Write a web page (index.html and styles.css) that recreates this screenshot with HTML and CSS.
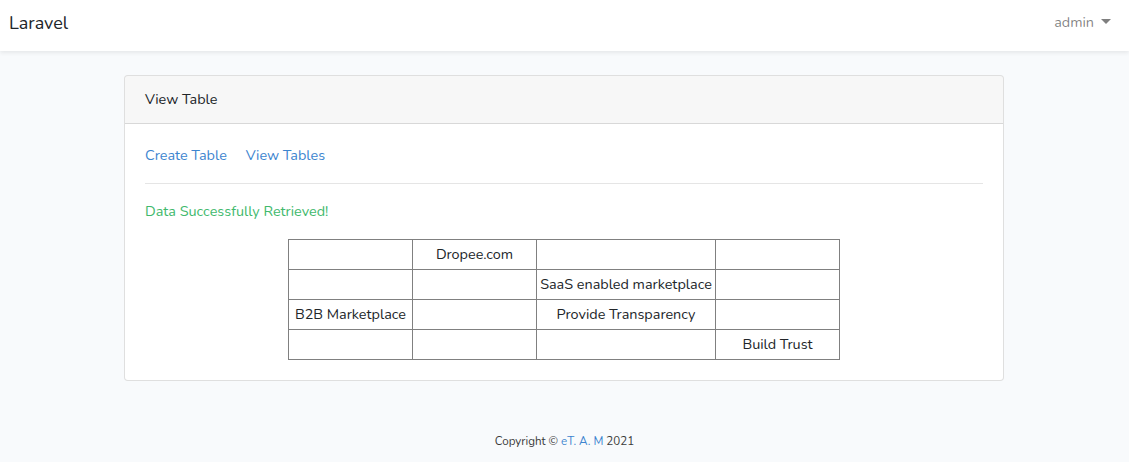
FILE: index.html
```html
<!DOCTYPE html>
<html lang="en">
<head>
<meta charset="utf-8">
<title>Laravel</title>
<link rel="stylesheet" href="styles.css">
</head>
<body>
<nav class="navbar">
  <a class="brand" href="#">Laravel</a>
  <a class="user" href="#">admin <span class="caret"></span></a>
</nav>
<main class="main">
  <div class="card">
    <div class="card-header">View Table</div>
    <div class="card-body">
      <div class="links">
        <a href="#">Create Table</a>
        <a href="#">View Tables</a>
      </div>
      <hr class="sep">
      <p class="success">Data Successfully Retrieved!</p>
      <table class="data">
        <colgroup>
          <col class="c1"><col class="c2"><col class="c3"><col class="c4">
        </colgroup>
        <tr><td></td><td>Dropee.com</td><td></td><td></td></tr>
        <tr><td></td><td></td><td>SaaS enabled marketplace</td><td></td></tr>
        <tr><td>B2B Marketplace</td><td></td><td>Provide Transparency</td><td></td></tr>
        <tr><td></td><td></td><td></td><td>Build Trust</td></tr>
      </table>
    </div>
  </div>
</main>
<footer class="footer">Copyright &copy; <a href="#">eT. A. M</a> 2021</footer>
</body>
</html>
```
FILE: styles.css
```css
* { box-sizing: border-box; }
html, body { margin: 0; padding: 0; }
body {
  background: #f8fafc;
  font-family: "Nunito", "Lato", "Open Sans", sans-serif;
  font-size: 14.4px;
  line-height: 1.6;
  color: #212529;
  min-height: 462px;
}
a { text-decoration: none; color: #3d85cf; }
.navbar {
  height: 51px;
  background: #fff;
  box-shadow: 0 2px 4px rgba(0,0,0,.075);
  display: flex;
  align-items: center;
  justify-content: space-between;
  padding: 0 18px 0 9px;
}
.brand { font-size: 18px; color: #212529; margin-top: -4px; }
.user { color: rgba(0,0,0,.5); font-size: 14.4px; display: flex; align-items: center; margin-top: -5px; }
.caret {
  display: inline-block;
  margin-left: 7px;
  border-top: 5px solid rgba(0,0,0,.5);
  border-left: 5px solid transparent;
  border-right: 5px solid transparent;
  width: 0; height: 0;
  margin-top: -2px;
}
.main { padding: 24px 0 0; display: flex; justify-content: center; }
.card {
  width: 880px;
  margin-left: -1px;
  background: #fff;
  border: 1px solid rgba(0,0,0,.125);
  border-radius: 4px;
}
.card-header {
  padding: 12px 20px 12px;
  background: rgba(0,0,0,.03);
  border-bottom: 1px solid rgba(0,0,0,.125);
  border-radius: 3px 3px 0 0;
}
.card-body { padding: 20px; }
.links { display: flex; gap: 19px; }
.sep { border: 0; border-top: 1px solid rgba(0,0,0,.1); margin: 16px 0; }
.success { color: #41b96c; margin: 0 0 16px; }
.data {
  border-collapse: collapse;
  margin: 0 auto;
  text-align: center;
}
.data td { border: 1px solid #808080; height: 30px; padding: 0 2px; white-space: nowrap; }
.c1, .c2, .c4 { width: 124px; }
.c3 { width: 179px; }
.footer {
  text-align: center;
  font-size: 11.6px;
  padding-top: 51px;
  color: #3a3a3a;
}
```
